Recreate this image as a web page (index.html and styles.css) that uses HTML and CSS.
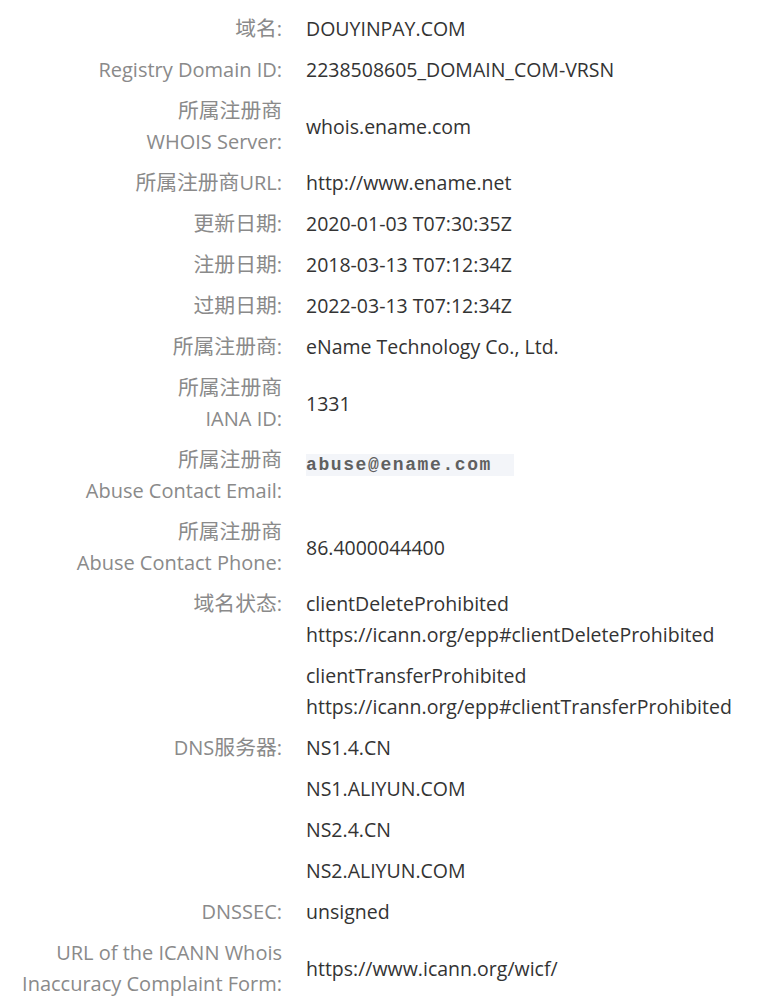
FILE: index.html
```html
<!DOCTYPE html>
<html lang="zh-CN">
<head>
<meta charset="utf-8">
<title>WHOIS</title>
<link rel="stylesheet" href="styles.css">
</head>
<body>
<dl class="whois">
  <div class="row"><dt class="label"><span class="cjk">域名</span>:</dt><dd class="value">DOUYINPAY.COM</dd></div>
  <div class="row"><dt class="label">Registry Domain ID:</dt><dd class="value">2238508605_DOMAIN_COM-VRSN</dd></div>
  <div class="row"><dt class="label"><span class="cjk">所属注册商</span><br>WHOIS Server:</dt><dd class="value">whois.ename.com</dd></div>
  <div class="row"><dt class="label"><span class="cjk">所属注册商</span>URL:</dt><dd class="value">http://www.ename.net</dd></div>
  <div class="row"><dt class="label"><span class="cjk">更新日期</span>:</dt><dd class="value">2020-01-03 T07:30:35Z</dd></div>
  <div class="row"><dt class="label"><span class="cjk">注册日期</span>:</dt><dd class="value">2018-03-13 T07:12:34Z</dd></div>
  <div class="row"><dt class="label"><span class="cjk">过期日期</span>:</dt><dd class="value">2022-03-13 T07:12:34Z</dd></div>
  <div class="row"><dt class="label"><span class="cjk">所属注册商</span>:</dt><dd class="value">eName Technology Co., Ltd.</dd></div>
  <div class="row"><dt class="label"><span class="cjk">所属注册商</span><br>IANA ID:</dt><dd class="value">1331</dd></div>
  <div class="row"><dt class="label"><span class="cjk">所属注册商</span><br>Abuse Contact Email:</dt><dd class="value"><span class="email">abuse@ename.com</span></dd></div>
  <div class="row"><dt class="label"><span class="cjk">所属注册商</span><br>Abuse Contact Phone:</dt><dd class="value">86.4000044400</dd></div>
  <div class="row top"><dt class="label"><span class="cjk">域名状态</span>:</dt><dd class="value stack">
    <span class="status">clientDeleteProhibited<br>https://icann.org/epp#clientDeleteProhibited</span>
    <span class="status">clientTransferProhibited<br>https://icann.org/epp#clientTransferProhibited</span>
  </dd></div>
  <div class="row top"><dt class="label">DNS<span class="cjk">服务器</span>:</dt><dd class="value stack">
    <span>NS1.4.CN</span>
    <span>NS1.ALIYUN.COM</span>
    <span>NS2.4.CN</span>
    <span>NS2.ALIYUN.COM</span>
  </dd></div>
  <div class="row"><dt class="label">DNSSEC:</dt><dd class="value">unsigned</dd></div>
  <div class="row"><dt class="label">URL of the ICANN Whois<br>Inaccuracy Complaint Form:</dt><dd class="value">https://www.icann.org/wicf/</dd></div>
</dl>
</body>
</html>
```

FILE: styles.css
```css
html, body {
  background: #ffffff;
}
body {
  margin: 8px;
  font-family: "Open Sans", "Noto Sans CJK SC", sans-serif;
  font-size: 19.5px;
  line-height: 31px;
}
.whois {
  margin: 0;
  display: flex;
  flex-direction: column;
}
.row {
  display: grid;
  grid-template-columns: 274px 1fr;
  column-gap: 24px;
  align-items: center;
  padding: 5px 0;
}
.row.top {
  align-items: start;
}
.label {
  margin: 0;
  text-align: right;
  color: #8a8a8a;
  white-space: nowrap;
  font-size: 20px;
}
.cjk {
  font-family: "Noto Sans CJK SC", sans-serif;
  font-size: 20.8px;
  line-height: 20px;
}
.value {
  margin: 0;
  color: #333333;
  white-space: nowrap;
}
.stack {
  display: flex;
  flex-direction: column;
  gap: 10px;
}
.email {
  display: inline-block;
  font-family: "Liberation Mono", monospace;
  font-size: 18px;
  letter-spacing: 1.6px;
  font-weight: bold;
  line-height: 22px;
  color: #606060;
  background: #f3f5f9;
  padding: 0 22px 0 0;
  vertical-align: top;
  margin-top: -6px;
}
```
